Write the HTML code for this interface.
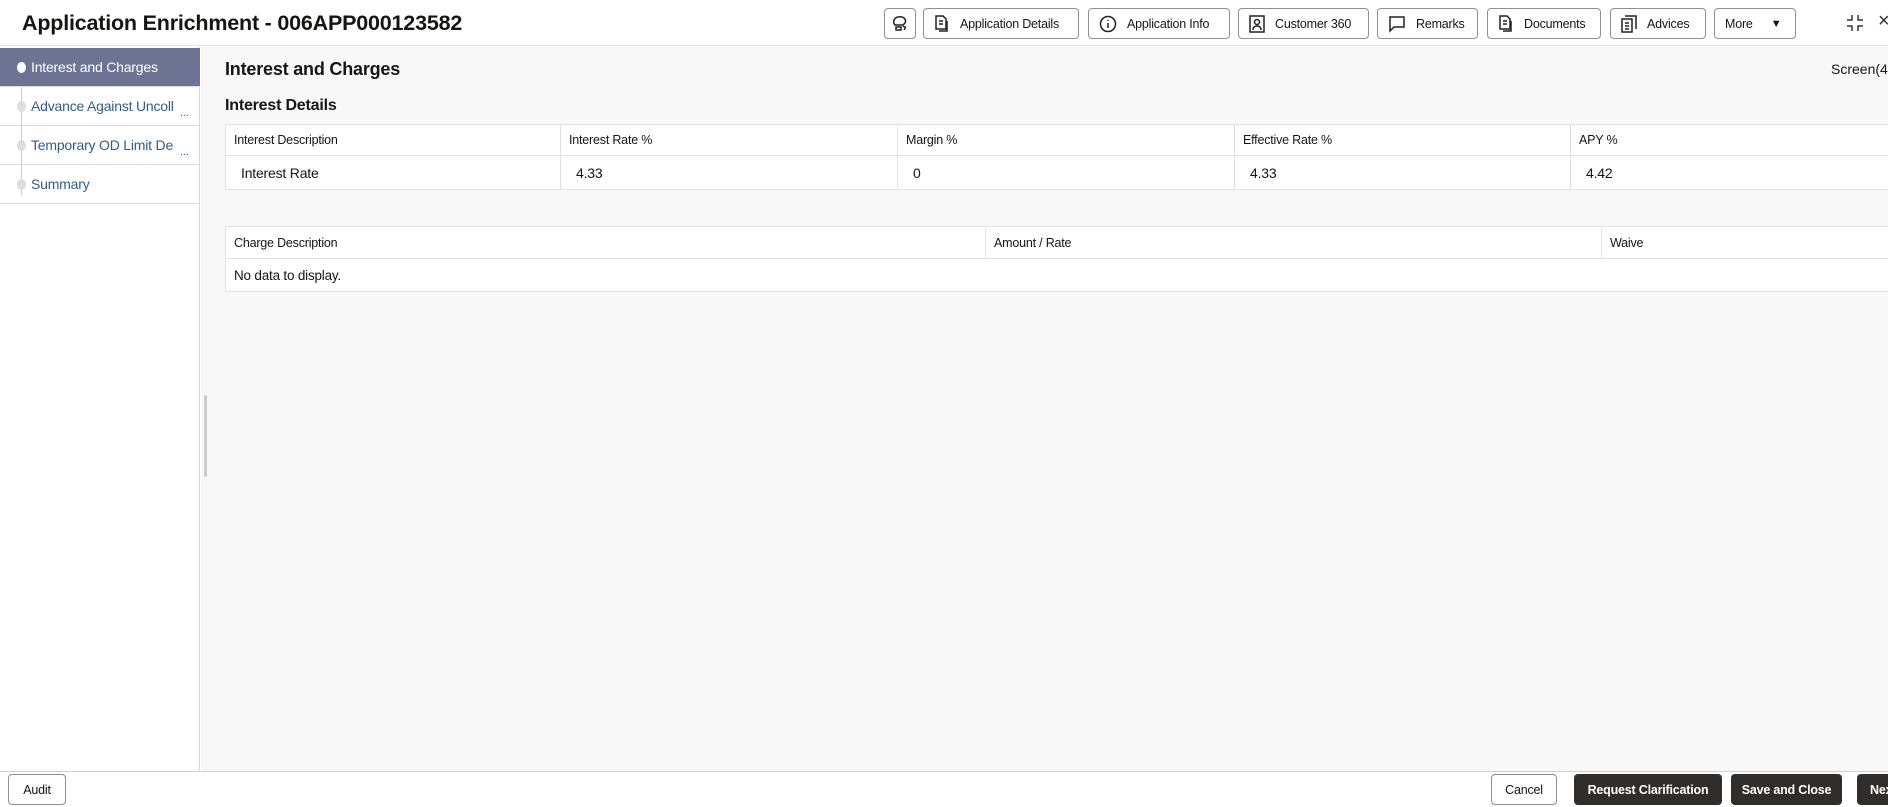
<!DOCTYPE html>
<html><head><meta charset="utf-8"><style>
*{box-sizing:border-box;margin:0;padding:0}
body{width:1888px;height:807px;overflow:hidden;font-family:"Liberation Sans",sans-serif;background:#fff;position:relative;color:#161513}
.hdr{position:absolute;left:0;top:0;width:1888px;height:46px;background:#fff;border-bottom:1px solid #e4e4e4}
.title{position:absolute;left:22px;top:11px;font-size:21.5px;font-weight:bold;letter-spacing:-0.2px}
.btn{position:absolute;top:8px;height:31px;border:1px solid #8f8f8f;border-radius:4px;background:#fff;font-size:12.5px;display:flex;align-items:center;padding-left:10px;gap:10px;white-space:nowrap;letter-spacing:-0.2px}
.btn svg{flex:none}
.side{position:absolute;left:0;top:47px;width:200px;height:724px;background:#fff;border-right:1px solid #d8d8d8}
.item{position:absolute;left:0;width:200px;height:39px;border-bottom:1px solid #dcdcdc;font-size:14px;color:#2e5e8c;padding:11px 0 0 31px;letter-spacing:-0.2px}
.item.act{background:#6d7493;color:#fff}
.dot{position:absolute;left:17px;top:14px;width:9px;height:11px;border-radius:50%;background:#ddd}
.act .dot{background:#fff}
.vl{position:absolute;left:21px;width:1px;background:#ccc}
.main{position:absolute;left:201px;top:47px;width:1687px;height:724px;background:#f8f8f8}
.h1{position:absolute;left:225px;top:59px;font-size:18px;font-weight:bold;letter-spacing:-0.2px}
.h2{position:absolute;left:225px;top:97px;font-size:16px;font-weight:bold;letter-spacing:-0.2px}
table{position:absolute;left:225px;border-collapse:collapse;background:#fff;font-size:12.5px;letter-spacing:-0.2px}
td{border:1px solid #e2e2e2;padding:0 8px;vertical-align:middle}
.foot{position:absolute;left:0;top:771px;width:1888px;height:36px;background:#fff;border-top:1px solid #cfcfcf}
.fb{position:absolute;top:2px;height:31px;border-radius:4px;font-size:12.5px;font-weight:bold;display:flex;align-items:center;justify-content:center;color:#fff;background:#312d2a;letter-spacing:-0.2px}
.fb.o{background:#fff;color:#161513;border:1px solid #8f8f8f;font-weight:normal}
</style></head><body>
<div class="hdr">
<div class="title">Application Enrichment - 006APP000123582</div>
<div class="btn" style="left:884px;width:32px;padding-left:7px"><svg width="16" height="18" viewBox="0 0 16 18" fill="none" stroke="#222" stroke-width="1.5"><path d="M3 10C1 8 1 3 6 2s9 2 7 6l-2 2H3z"/><path d="M4 12h5v3H4z"/><path d="M11 12c1-1 3 0 2 1.5L12 15"/></svg></div>
<div class="btn" style="left:923px;width:156px"><svg width="16" height="18" viewBox="0 0 16 18" fill="none" stroke="#222" stroke-width="1.5"><path d="M2 1h7l3 3v10H2z"/><path d="M5 6h4M5 9h4"/><path d="M13 6v10H5"/></svg>Application Details</div>
<div class="btn" style="left:1088px;width:142px"><svg width="18" height="18" viewBox="0 0 18 18" fill="none" stroke="#222" stroke-width="1.5"><circle cx="9" cy="9" r="7.5"/><path d="M9 8v5M9 5v1"/></svg>Application Info</div>
<div class="btn" style="left:1238px;width:131px"><svg width="16" height="18" viewBox="0 0 16 18" fill="none" stroke="#222" stroke-width="1.5"><rect x="1" y="1" width="14" height="16"/><circle cx="8" cy="7" r="2.5"/><path d="M4 15c0-3 2-4 4-4s4 1 4 4"/></svg>Customer 360</div>
<div class="btn" style="left:1377px;width:101px"><svg width="18" height="18" viewBox="0 0 18 18" fill="none" stroke="#222" stroke-width="1.5"><path d="M2 2h14v10H6l-4 4z"/></svg>Remarks</div>
<div class="btn" style="left:1487px;width:114px"><svg width="16" height="18" viewBox="0 0 16 18" fill="none" stroke="#222" stroke-width="1.5"><path d="M2 1h7l3 3v10H2z"/><path d="M5 6h4M5 9h4"/><path d="M13 6v10H5"/></svg>Documents</div>
<div class="btn" style="left:1610px;width:96px"><svg width="16" height="18" viewBox="0 0 16 18" fill="none" stroke="#222" stroke-width="1.5"><rect x="1" y="4" width="10" height="13"/><path d="M4 1h11v13M4 8h4M4 11h4M4 14h4"/></svg>Advices</div>
<div class="btn" style="left:1714px;width:82px;gap:18px">More<span style="font-size:11px">▼</span></div>
<div style="position:absolute;left:1846px;top:14px;width:18px;height:18px"><svg width="18" height="18" viewBox="0 0 18 18" fill="none" stroke="#333" stroke-width="1.5"><path d="M6 1v5H1M12 1v5h5M6 17v-5H1M12 17v-5h5"/></svg></div>
<div style="position:absolute;left:1878px;top:10px;font-size:20px;color:#333">×</div>
</div>
<div class="side">
<div class="vl" style="top:18px;height:130px"></div>
<div class="item act" style="top:1px"><span class="dot"></span>Interest and Charges</div>
<div class="item" style="top:40px"><span class="dot"></span>Advance Against Uncoll<span style="position:absolute;left:180px;top:20px;font-size:11px">...</span></div>
<div class="item" style="top:79px"><span class="dot"></span>Temporary OD Limit De<span style="position:absolute;left:180px;top:20px;font-size:11px">...</span></div>
<div class="item" style="top:118px"><span class="dot"></span>Summary</div>
</div>
<div class="main"><div style="position:absolute;left:3px;top:348px;width:3px;height:82px;background:#ccc;border-radius:2px"></div></div>
<div class="h1">Interest and Charges</div>
<div style="position:absolute;left:1831px;top:61px;font-size:14px">Screen(4</div>
<div class="h2">Interest Details</div>
<table style="top:124px;width:1680px">
<tr style="height:31px"><td style="width:335px">Interest Description</td><td style="width:337px">Interest Rate %</td><td style="width:337px">Margin %</td><td style="width:336px">Effective Rate %</td><td>APY %</td></tr>
<tr style="height:34px;font-size:14px"><td style="padding-left:15px">Interest Rate</td><td style="padding-left:15px">4.33</td><td style="padding-left:15px">0</td><td style="padding-left:15px">4.33</td><td style="padding-left:15px">4.42</td></tr>
</table>
<table style="top:226px;width:1680px">
<tr style="height:32px"><td style="width:760px">Charge Description</td><td style="width:616px">Amount / Rate</td><td>Waive</td></tr>
<tr style="height:33px;font-size:13.5px"><td colspan="3">No data to display.</td></tr>
</table>
<div class="foot">
<div class="fb o" style="left:8px;width:58px">Audit</div>
<div class="fb o" style="left:1491px;width:66px">Cancel</div>
<div class="fb" style="left:1574px;width:148px">Request Clarification</div>
<div class="fb" style="left:1731px;width:111px">Save and Close</div>
<div class="fb" style="left:1857px;width:60px;justify-content:flex-start;padding-left:13px">Next</div>
</div>
</body></html>
